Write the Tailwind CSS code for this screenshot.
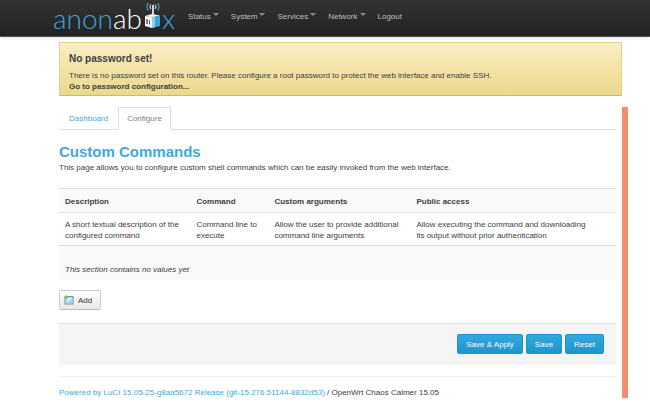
<!DOCTYPE html>
<html lang="en">
<head>
  <meta charset="UTF-8" />
  <meta name="viewport" content="width=device-width, initial-scale=1" />
  <title>anonabox - Custom Commands - LuCI</title>
  <script src="https://cdn.jsdelivr.net/npm/@tailwindcss/browser@4"></script>
</head>
<body class="bg-white font-['Liberation_Sans',Arial,sans-serif] text-[8px] leading-[11px] text-[#404040]">

  <header class="flex h-[37px] items-start border-b border-[#555] bg-linear-to-b from-[#333] to-[#222] pl-[53px] shadow-sm">
    <a href="#" aria-label="anonabox" class="flex h-9 items-start font-['Lato',sans-serif] text-[28px] leading-9 font-light text-[#3fa3d8]">
      <span>anon</span><span class="text-white">ab</span>
      <!-- box with antenna -->
      <svg class="mt-px h-7 w-[20px]" viewBox="0 0 20 28" fill="none">
        <path d="M6.500 2C4.500 4 4.500 7.500 6.500 9.500M15.500 2C17.500 4 17.500 7.500 15.500 9.500" stroke="#3fa3d8" stroke-width="1.100" />
        <path d="M9 3.500C7.800 4.500 7.800 7 9 8M13 3.500C14.200 4.500 14.200 7 13 8" stroke="#fff" stroke-width="1" />
        <path d="M11 4V15" stroke="#fff" stroke-width="1.600" />
        <path d="M3 15L10 13L18 14.500L10 16.500Z" fill="#e8f4fa" />
        <path d="M3 15L10 16.500V27L3 25Z" fill="#fff" />
        <path d="M5 18V23" stroke="#333" stroke-width="1.300" />
        <path d="M7.500 19V23.500" stroke="#333" stroke-width=".8" />
        <path d="M10 16.500L18 14.500V25L10 27Z" fill="#3fa3d8" />
        <path d="M10 16.500L13 15.800V26.300L10 27Z" fill="#8fd0ee" />
      </svg>
      <span>x</span>
    </a>
    <nav class="ml-[13px] mt-[11px] flex gap-3 text-[#bfbfbf]">
      <a href="#" class="flex gap-[2px]">Status <span class="mt-[2px] h-0 w-0 border-x-[3px] border-t-[3px] border-x-transparent border-t-[#8a8a8a]"></span></a>
      <a href="#" class="flex gap-[2px]">System <span class="mt-[2px] h-0 w-0 border-x-[3px] border-t-[3px] border-x-transparent border-t-[#8a8a8a]"></span></a>
      <a href="#" class="flex gap-[2px]">Services <span class="mt-[2px] h-0 w-0 border-x-[3px] border-t-[3px] border-x-transparent border-t-[#8a8a8a]"></span></a>
      <a href="#" class="flex gap-[2px]">Network <span class="mt-[2px] h-0 w-0 border-x-[3px] border-t-[3px] border-x-transparent border-t-[#8a8a8a]"></span></a>
      <a href="#">Logout</a>
    </nav>
  </header>

  <div class="mr-7 ml-[59px] mt-[5px] border border-[#dfcf8c] border-b-[#c9b978] bg-linear-to-b from-[#fbeec1] to-[#ebd88c] px-[9px] pt-[9px] pb-[3px]">
    <h4 class="mb-1 text-[10px] leading-[14px] font-bold">No password set!</h4>
    <p>There is no password set on this router. Please configure a root password to protect the web interface and enable SSH.</p>
    <a href="#" class="block font-bold">Go to password configuration...</a>
  </div>

  <div class="mr-[22px] ml-[59px] mt-[11px] border-r-6 border-[#f08f6c] pr-[6px]">
    <ul class="flex border-b border-[#ddd]">
      <li><a href="#" class="block px-[10px] pt-[6px] pb-[5px] text-[#3fa9dc]">Dashboard</a></li>
      <li class="-mb-px"><a href="#" class="block border border-[#ddd] border-b-white bg-white px-2 py-[5px] text-[#808080]">Configure</a></li>
    </ul>

    <main>
      <h2 class="mt-[13px] text-[15px] leading-[18px] font-bold text-[#3fa9dc]">Custom Commands</h2>
      <p class="mt-px">This page allows you to configure custom shell commands which can be easily invoked from the web interface.</p>

      <table class="mt-[15px] w-full table-fixed border-t border-[#ddd] text-left align-top">
        <colgroup>
          <col class="w-[23.6%]" />
          <col class="w-[14%]" />
          <col class="w-[25.5%]" />
          <col class="w-[33.4%]" />
          <col />
        </colgroup>
        <thead>
          <tr class="border-b border-[#e4e4e4] bg-[#f9f9f9]">
            <th class="px-[6px] pt-[7px] pb-[5px]">Description</th>
            <th class="px-[6px] pt-[7px] pb-[5px]">Command</th>
            <th class="px-[6px] pt-[7px] pb-[5px]">Custom arguments</th>
            <th class="px-[6px] pt-[7px] pb-[5px]">Public access</th>
            <td></td>
          </tr>
        </thead>
        <tbody>
          <tr class="border-b border-[#ddd]">
            <td class="px-[6px] pt-[6px] pb-1">A short textual description of the configured command</td>
            <td class="px-[6px] pt-[6px] pb-1">Command line to execute</td>
            <td class="px-[6px] pt-[6px] pb-1">Allow the user to provide additional command line arguments</td>
            <td class="px-[6px] pt-[6px] pb-1">Allow executing the command and downloading its output without prior authentication</td>
            <td></td>
          </tr>
          <tr class="bg-[#f9f9f9]">
            <td colspan="5" class="px-[6px] pt-[18px] pb-[5px] italic">This section contains no values yet</td>
          </tr>
        </tbody>
      </table>

      <button type="button" class="mt-[10px] flex h-5 items-center gap-1 rounded-[2px] border border-[#ccc] border-b-[#bbb] bg-linear-to-b from-white to-[#e8e8e8] px-1 pr-2 text-[#333]">
        <svg class="h-[10px] w-[10px]" viewBox="0 0 10 10">
          <rect x="1" y="1.500" width="8" height="7.500" fill="#c9e6f7" stroke="#5a93ba" stroke-width="1" />
          <path d="M2 8.500L8.500 4V8.500Z" fill="#9fd0ee" />
          <path d="M2.300 .3V4.300M.3 2.300H4.300" stroke="#8cc450" stroke-width="1.500" />
        </svg>
        Add
      </button>

      <div class="mt-[13px] flex justify-end gap-[3px] border-t border-[#ddd] bg-[#f5f5f5] px-3 pt-[10px] pb-[11px] text-white">
        <button type="button" class="h-5 rounded-[2px] border border-[#1c92cc] bg-linear-to-b from-[#32a8de] to-[#1c96d0] px-2">Save &amp; Apply</button>
        <button type="button" class="h-5 rounded-[2px] border border-[#1c92cc] bg-linear-to-b from-[#32a8de] to-[#1c96d0] px-2">Save</button>
        <button type="button" class="h-5 rounded-[2px] border border-[#1c92cc] bg-linear-to-b from-[#32a8de] to-[#1c96d0] px-2">Reset</button>
      </div>
    </main>

    <footer class="mt-[11px] border-t border-[#eee] pt-[11px] leading-[10px]">
      <a href="#" class="text-[#3fa9dc]">Powered by LuCI 15.05-25-g8aa5672 Release (git-15.276.51144-8832d53)</a> / OpenWrt Chaos Calmer 15.05
    </footer>
  </div>

</body>
</html>
